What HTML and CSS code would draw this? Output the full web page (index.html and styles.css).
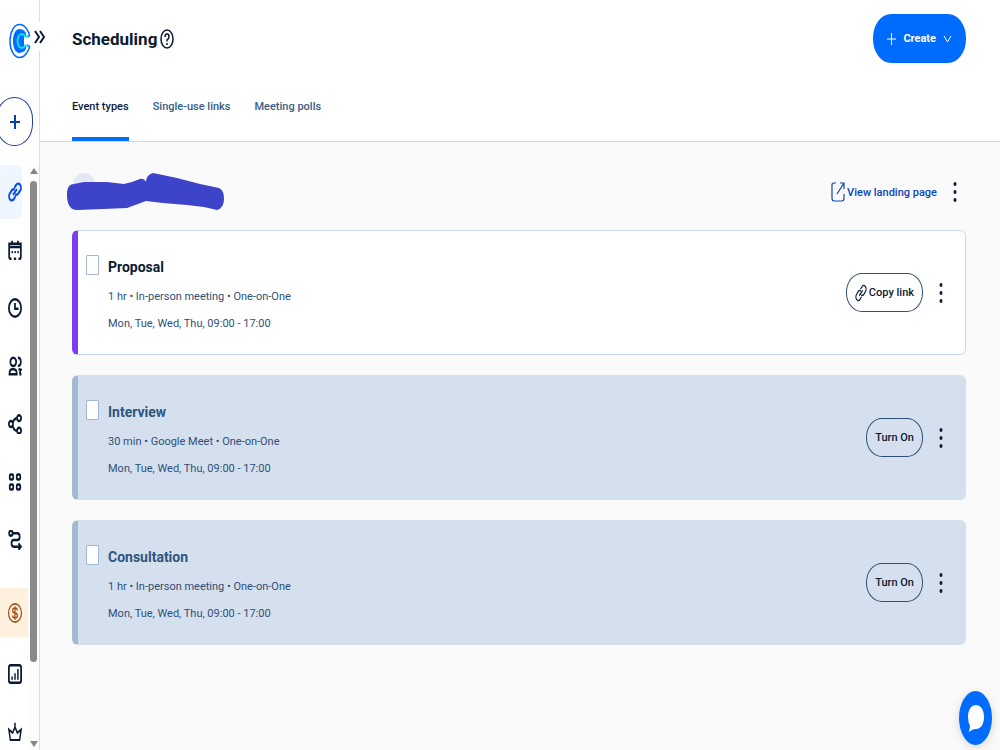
FILE: index.html
```html
<!DOCTYPE html>
<html lang="en">
<head>
  <meta charset="UTF-8" />
  <meta name="viewport" content="width=device-width, initial-scale=1" />
  <title>Scheduling</title>
  <link rel="stylesheet" href="styles.css">
</head>
<body>

  <svg class="sprite" aria-hidden="true">
    <symbol id="i-link" viewBox="0 0 24 24" preserveAspectRatio="none">
      <path d="M8.500 15.500l7-7M11 7l3-3.500a4.500 4.500 0 0 1 7 6.500l-3.500 4a4 4 0 0 1-5 .500M13 17l-3 3.500a4.500 4.500 0 0 1-7-6.500l3.500-4a4 4 0 0 1 5-.500"/>
    </symbol>
    <symbol id="i-dots" viewBox="0 0 4 20" preserveAspectRatio="none">
      <g fill="currentColor" stroke="none">
        <ellipse cx="2" cy="2" rx="1.500" ry="2"/>
        <ellipse cx="2" cy="10" rx="1.500" ry="2"/>
        <ellipse cx="2" cy="18" rx="1.500" ry="2"/>
      </g>
    </symbol>
  </svg>

  <aside class="sidebar">
    <a class="logo" href="#" aria-label="Home">
      <svg viewBox="0 0 22 36" preserveAspectRatio="none">
        <path d="M18 6.500Q15 1.500 10.500 1.500C5 1.500 1 9 1 18S5 34.500 10.500 34.500Q15 34.500 18 29.500" stroke="#006bff" stroke-width="1.500"/>
        <path d="M18 6.500Q20.500 10 20.500 12.500L18 14M18 29.500Q20.500 26 20.500 23.500L18 22" stroke="#006bff" stroke-width="1.500"/>
        <path d="M16.500 9Q14 6 10.500 6C6.500 6 4 11 4 18S6.500 30 10.500 30Q14 30 16.500 27L17.500 22.500H15V13.500H17.500Z" fill="#006bff"/>
        <path d="M19.500 13.500H16.500Q15 11 12.500 11Q8.500 12 8.500 18T12.500 25Q15 25 16.500 22.500H19.500" stroke="#0ae8f0" stroke-width="1.800"/>
      </svg>
    </a>
    <button class="expand" aria-label="Expand menu">
      <svg viewBox="0 0 11 16"><path d="M1 2l4 6-4 6M6 2l4 6-4 6"/></svg>
    </button>
    <button class="add" aria-label="Create">
      <svg viewBox="0 0 10 16"><path d="M5 1v14M0 8h10"/></svg>
    </button>

    <div class="menu">
      <nav class="menu-items">
        <a class="item active" href="#" aria-label="Scheduling">
          <svg><use href="#i-link"/></svg>
        </a>
        <a class="item" href="#" aria-label="Meetings">
          <svg viewBox="0 0 24 24" preserveAspectRatio="none"><path d="M2 4.500h20v4H2zM2 8v12q0 2.500 3 2.500h1M22 8v12q0 2.500-3 2.500h-1M7 1v3M17 1v3M10 22.500h4"/><path d="M6 14.500h2.500M11 14.500h2.500M16 14.500h2.500" stroke-width="2.500"/></svg>
        </a>
        <a class="item" href="#" aria-label="Availability">
          <svg viewBox="0 0 24 24" preserveAspectRatio="none"><circle cx="12" cy="12" r="10.500"/><path d="M12 6v7h6"/></svg>
        </a>
        <a class="item" href="#" aria-label="Contacts">
          <svg viewBox="0 0 24 24" preserveAspectRatio="none"><circle cx="9" cy="7" r="5"/><path d="M2.500 22q0-6 4.500-6h3q5 0 5 6zM17 2q5 0 5 5t-5 5M18 16l4 .500q-2 2.500-1 5.500h2"/></svg>
        </a>
        <a class="item" href="#" aria-label="Workflows">
          <svg viewBox="0 0 24 24" preserveAspectRatio="none"><circle cx="5" cy="12" r="3.500"/><circle cx="19" cy="5" r="3.500"/><circle cx="19" cy="20" r="3.500"/><path d="M8 10q3-5 7-5M8 14q2 6 7 6"/></svg>
        </a>
        <a class="item" href="#" aria-label="Integrations">
          <svg viewBox="0 0 24 24" preserveAspectRatio="none"><rect x="3" y="3" width="6" height="6" rx="2"/><rect x="15" y="3" width="6" height="6" rx="2"/><rect x="3" y="15" width="6" height="6" rx="2"/><rect x="15" y="15" width="6" height="6" rx="2"/></svg>
        </a>
        <a class="item" href="#" aria-label="Routing">
          <svg viewBox="0 0 24 24" preserveAspectRatio="none"><circle cx="5" cy="4" r="3"/><path d="M8 4h8q4 0 4 4t-4 4h-6q-4 0-4 4t4 4h12M18 16l4 4-4 4"/></svg>
        </a>
        <a class="item billing" href="#" aria-label="Billing">
          <svg viewBox="0 0 24 24" preserveAspectRatio="none"><circle cx="12" cy="12" r="11"/><path d="M16 9q0-3-4-3t-4 3 4 3 4 3-4 3-4-3M12 4v16"/></svg>
        </a>
        <a class="item" href="#" aria-label="Analytics">
          <svg viewBox="0 0 24 24" preserveAspectRatio="none"><rect x="1.500" y="1.500" width="21" height="21" rx="3"/><path d="M7 19v-4M12 19v-8M17 19V6" stroke-width="2.500"/></svg>
        </a>
        <a class="item" href="#" aria-label="Admin center">
          <svg viewBox="0 0 24 24" preserveAspectRatio="none"><path d="M4 21.500L1.500 9l6.500 4 4-7 4 7 6.500-4L20 21.500zM12 1v4" stroke-width="2.500"/></svg>
        </a>
      </nav>
      <div class="scrollbar" aria-hidden="true">
        <span class="arrow-up"></span>
        <span class="thumb"></span>
        <span class="arrow-down"></span>
      </div>
    </div>
  </aside>

  <main>
    <header>
      <div class="title-row">
        <h1>Scheduling</h1>
        <button class="help" aria-label="Help">
          <svg viewBox="0 0 14 20"><ellipse cx="7" cy="10" rx="6" ry="9"/><path d="M5 8q0-3 2-3t2 2.500-2 3.500v1.500M7 14v2"/></svg>
        </button>
        <button class="create">
          <svg viewBox="0 0 9 12"><path d="M4.500 0v12M0 6h9"/></svg>
          Create
          <svg viewBox="0 0 9 12"><path d="M1 3l3.500 6L8 3"/></svg>
        </button>
      </div>
      <nav class="tabs">
        <a class="tab selected" href="#">Event types</a>
        <a class="tab" href="#">Single-use links</a>
        <a class="tab" href="#">Meeting polls</a>
      </nav>
    </header>

    <section class="content">
      <div class="profile">
        <svg class="name-mask" viewBox="0 0 158 40" aria-hidden="true">
          <circle cx="17" cy="12" r="11" fill="#e3e9f4"/>
          <path d="M7 12Q12 11 17 10L40 10 57 12Q66 10 73 7Q77 6 79 10Q79 3 86 1L110 6 133 12 152 16Q157 18 157 27T150 38L137 35 120 33 96 31 79 29 60 36 36 37 10 38Q1 38 0 25T7 12Z" fill="#3d44c9"/>
        </svg>
        <a class="landing" href="#">
          <svg viewBox="0 0 14 20"><path d="M5 1H3Q1 1 1 3v13q0 3 2 3h8q2 0 2-3v-4M6 12L13 1M9 1h4v6"/></svg>
          View landing page
        </a>
        <button class="dots" aria-label="Profile options"><svg><use href="#i-dots"/></svg></button>
      </div>

      <article class="card">
        <input type="checkbox" id="proposal">
        <div class="info">
          <h2><label for="proposal">Proposal</label></h2>
          <p>1 hr • In-person meeting • One-on-One</p>
          <p>Mon, Tue, Wed, Thu, 09:00 - 17:00</p>
        </div>
        <button class="pill"><svg><use href="#i-link"/></svg>Copy link</button>
        <button class="dots" aria-label="Proposal options"><svg><use href="#i-dots"/></svg></button>
      </article>

      <article class="card off">
        <input type="checkbox" id="interview">
        <div class="info">
          <h2><label for="interview">Interview</label></h2>
          <p>30 min • Google Meet • One-on-One</p>
          <p>Mon, Tue, Wed, Thu, 09:00 - 17:00</p>
        </div>
        <button class="pill">Turn On</button>
        <button class="dots" aria-label="Interview options"><svg><use href="#i-dots"/></svg></button>
      </article>

      <article class="card off">
        <input type="checkbox" id="consultation">
        <div class="info">
          <h2><label for="consultation">Consultation</label></h2>
          <p>1 hr • In-person meeting • One-on-One</p>
          <p>Mon, Tue, Wed, Thu, 09:00 - 17:00</p>
        </div>
        <button class="pill">Turn On</button>
        <button class="dots" aria-label="Consultation options"><svg><use href="#i-dots"/></svg></button>
      </article>
    </section>
  </main>

  <button class="chat" aria-label="Open chat">
    <svg viewBox="0 0 18 28"><path d="M9 1C14 1 17 6 17 13S14 25 9 25Q7 25 5 26L2 28 3 22Q1 18 1 13C1 6 4 1 9 1Z" fill="#fff"/></svg>
  </button>

</body>
</html>
```

FILE: styles.css
```css
* {
  box-sizing: border-box;
}

body {
  margin: 0;
  height: 100vh;
  display: flex;
  overflow: hidden;
  font-family: 'Roboto', sans-serif;
  font-size: 11px;
  color: #0b1a33;
  background: #fafafa;
}

svg {
  fill: none;
  stroke: currentColor;
  stroke-width: 2;
  flex-shrink: 0;
}

button {
  font: inherit;
  color: inherit;
  background: none;
  border: none;
  padding: 0;
  cursor: pointer;
}

a {
  color: inherit;
  text-decoration: none;
}

.sprite {
  position: absolute;
  width: 0;
  height: 0;
}

/* sidebar */

.sidebar {
  position: relative;
  width: 40px;
  flex-shrink: 0;
  display: flex;
  flex-direction: column;
  background: white;
  border-right: 1px solid #d4e0ed;
}

.logo {
  height: 36px;
  margin: 23px 0 38px 9px;
}

.logo svg {
  width: 22px;
  height: 36px;
  stroke: none;
}

.expand {
  position: absolute;
  left: 34px;
  top: 22px;
  width: 12px;
  height: 29px;
  background: white;
}

.expand svg {
  display: block;
  width: 11px;
  height: 16px;
}

.add {
  width: 37px;
  height: 49px;
  margin-left: -4px;
  margin-bottom: 19px;
  border: 1px solid #2340a8;
  border-radius: 18px / 22px;
  color: #0b3fae;
}

.add svg {
  width: 10px;
  height: 16px;
  vertical-align: middle;
}

.menu {
  flex: 1;
  min-height: 0;
  display: flex;
  overflow: hidden;
}

.menu-items {
  flex: 1;
  display: flex;
  flex-direction: column;
  gap: 4px;
}

.item {
  height: 54px;
  flex-shrink: 0;
  display: flex;
  align-items: center;
  padding-left: 8px;
}

.item svg {
  width: 14px;
  height: 20px;
  stroke-width: 3;
}

.item.active {
  width: 22px;
  color: #0b4fe0;
  background: #f0f6ff;
  border-radius: 0 6px 6px 0;
}

.item.billing {
  height: 49px;
  margin: 17px 0 6px;
  color: #9a4a14;
  background: #fff1de;
}

.item.billing svg {
  stroke-width: 2;
}

.scrollbar {
  width: 11px;
  display: flex;
  flex-direction: column;
  align-items: center;
  padding: 3px 0;
  background: #fcfcfc;
}

.arrow-up,
.arrow-down {
  border: 4px solid transparent;
}

.arrow-up {
  border-top: 0;
  border-bottom: 6px solid #858585;
}

.arrow-down {
  margin-top: auto;
  border-top: 6px solid #858585;
  border-bottom: 0;
}

.thumb {
  width: 7px;
  height: 83%;
  margin-top: 7px;
  background: #8a8a8a;
  border-radius: 4px;
}

/* header */

main {
  flex: 1;
  min-width: 0;
}

header {
  background: white;
  border-bottom: 1px solid #c9d8ea;
  padding: 14px 34px 0 32px;
}

.title-row {
  display: flex;
  align-items: center;
  gap: 3px;
}

h1 {
  margin: 0;
  font-size: 17px;
  line-height: 28px;
}

.help svg {
  display: block;
  width: 14px;
  height: 20px;
  stroke-width: 1.5;
}

.create {
  height: 49px;
  margin-left: auto;
  padding: 0 14px;
  display: flex;
  align-items: center;
  gap: 7px;
  font-weight: bold;
  color: white;
  background: #006bff;
  border-radius: 18px / 24px;
}

.create svg {
  width: 9px;
  height: 12px;
  stroke-width: 1;
}

.tabs {
  display: flex;
  gap: 24px;
  margin-top: 24px;
}

.tab {
  height: 54px;
  padding-top: 10px;
  line-height: 20px;
  font-weight: 500;
  color: #3c5d84;
}

.tab.selected {
  color: #0b1a33;
  border-bottom: 4px solid #006bff;
}

/* event types */

.content {
  display: flex;
  flex-direction: column;
  gap: 20px;
  padding: 30px 34px 20px 32px;
}

.profile {
  display: flex;
  align-items: center;
  height: 40px;
  margin-bottom: -2px;
  padding-right: 9px;
}

.name-mask {
  width: 158px;
  height: 40px;
  margin-left: -5px;
  stroke: none;
}

.landing {
  display: flex;
  align-items: center;
  gap: 2px;
  margin-left: auto;
  margin-right: 16px;
  font-weight: 500;
  color: #0b45b5;
}

.landing svg {
  width: 14px;
  height: 20px;
  stroke-width: 1.2;
}

.dots svg {
  display: block;
  width: 4px;
  height: 20px;
}

.card {
  display: flex;
  align-items: center;
  padding: 0 22px 0 8px;
  background: white;
  border: 1px solid #c9d8ea;
  border-left: 6px solid #7b3ff2;
  border-radius: 6px;
}

.card.off {
  background: #d5e0ee;
  border-color: #d5e0ee;
  border-left-color: #a3b9d3;
}

.card input {
  appearance: none;
  align-self: flex-start;
  width: 13px;
  height: 20px;
  margin: 24px 9px 0 0;
  background: white;
  border: 1px solid #a3b9d3;
  border-radius: 1px;
}

.info {
  flex: 1;
  padding: 24px 0 17px;
}

h2 {
  margin: 0 0 4px;
  font-size: 14px;
  line-height: 24px;
}

.info p {
  margin: 0;
  line-height: 27px;
  color: #2f4f78;
}

.off h2 {
  color: #2f5580;
}

.pill {
  height: 39px;
  margin-right: 16px;
  padding: 0 8px;
  display: flex;
  align-items: center;
  gap: 2px;
  font-weight: 500;
  border: 1px solid #2f4f78;
  border-radius: 16px / 19px;
}

.pill svg {
  width: 12px;
  height: 18px;
}

.chat {
  position: fixed;
  right: 8px;
  bottom: 5px;
  width: 33px;
  height: 54px;
  background: #006bff;
  border-radius: 50%;
  box-shadow: 0 2px 10px rgba(0, 0, 0, 0.15);
}

.chat svg {
  width: 18px;
  height: 28px;
  stroke: none;
  vertical-align: middle;
}
```
